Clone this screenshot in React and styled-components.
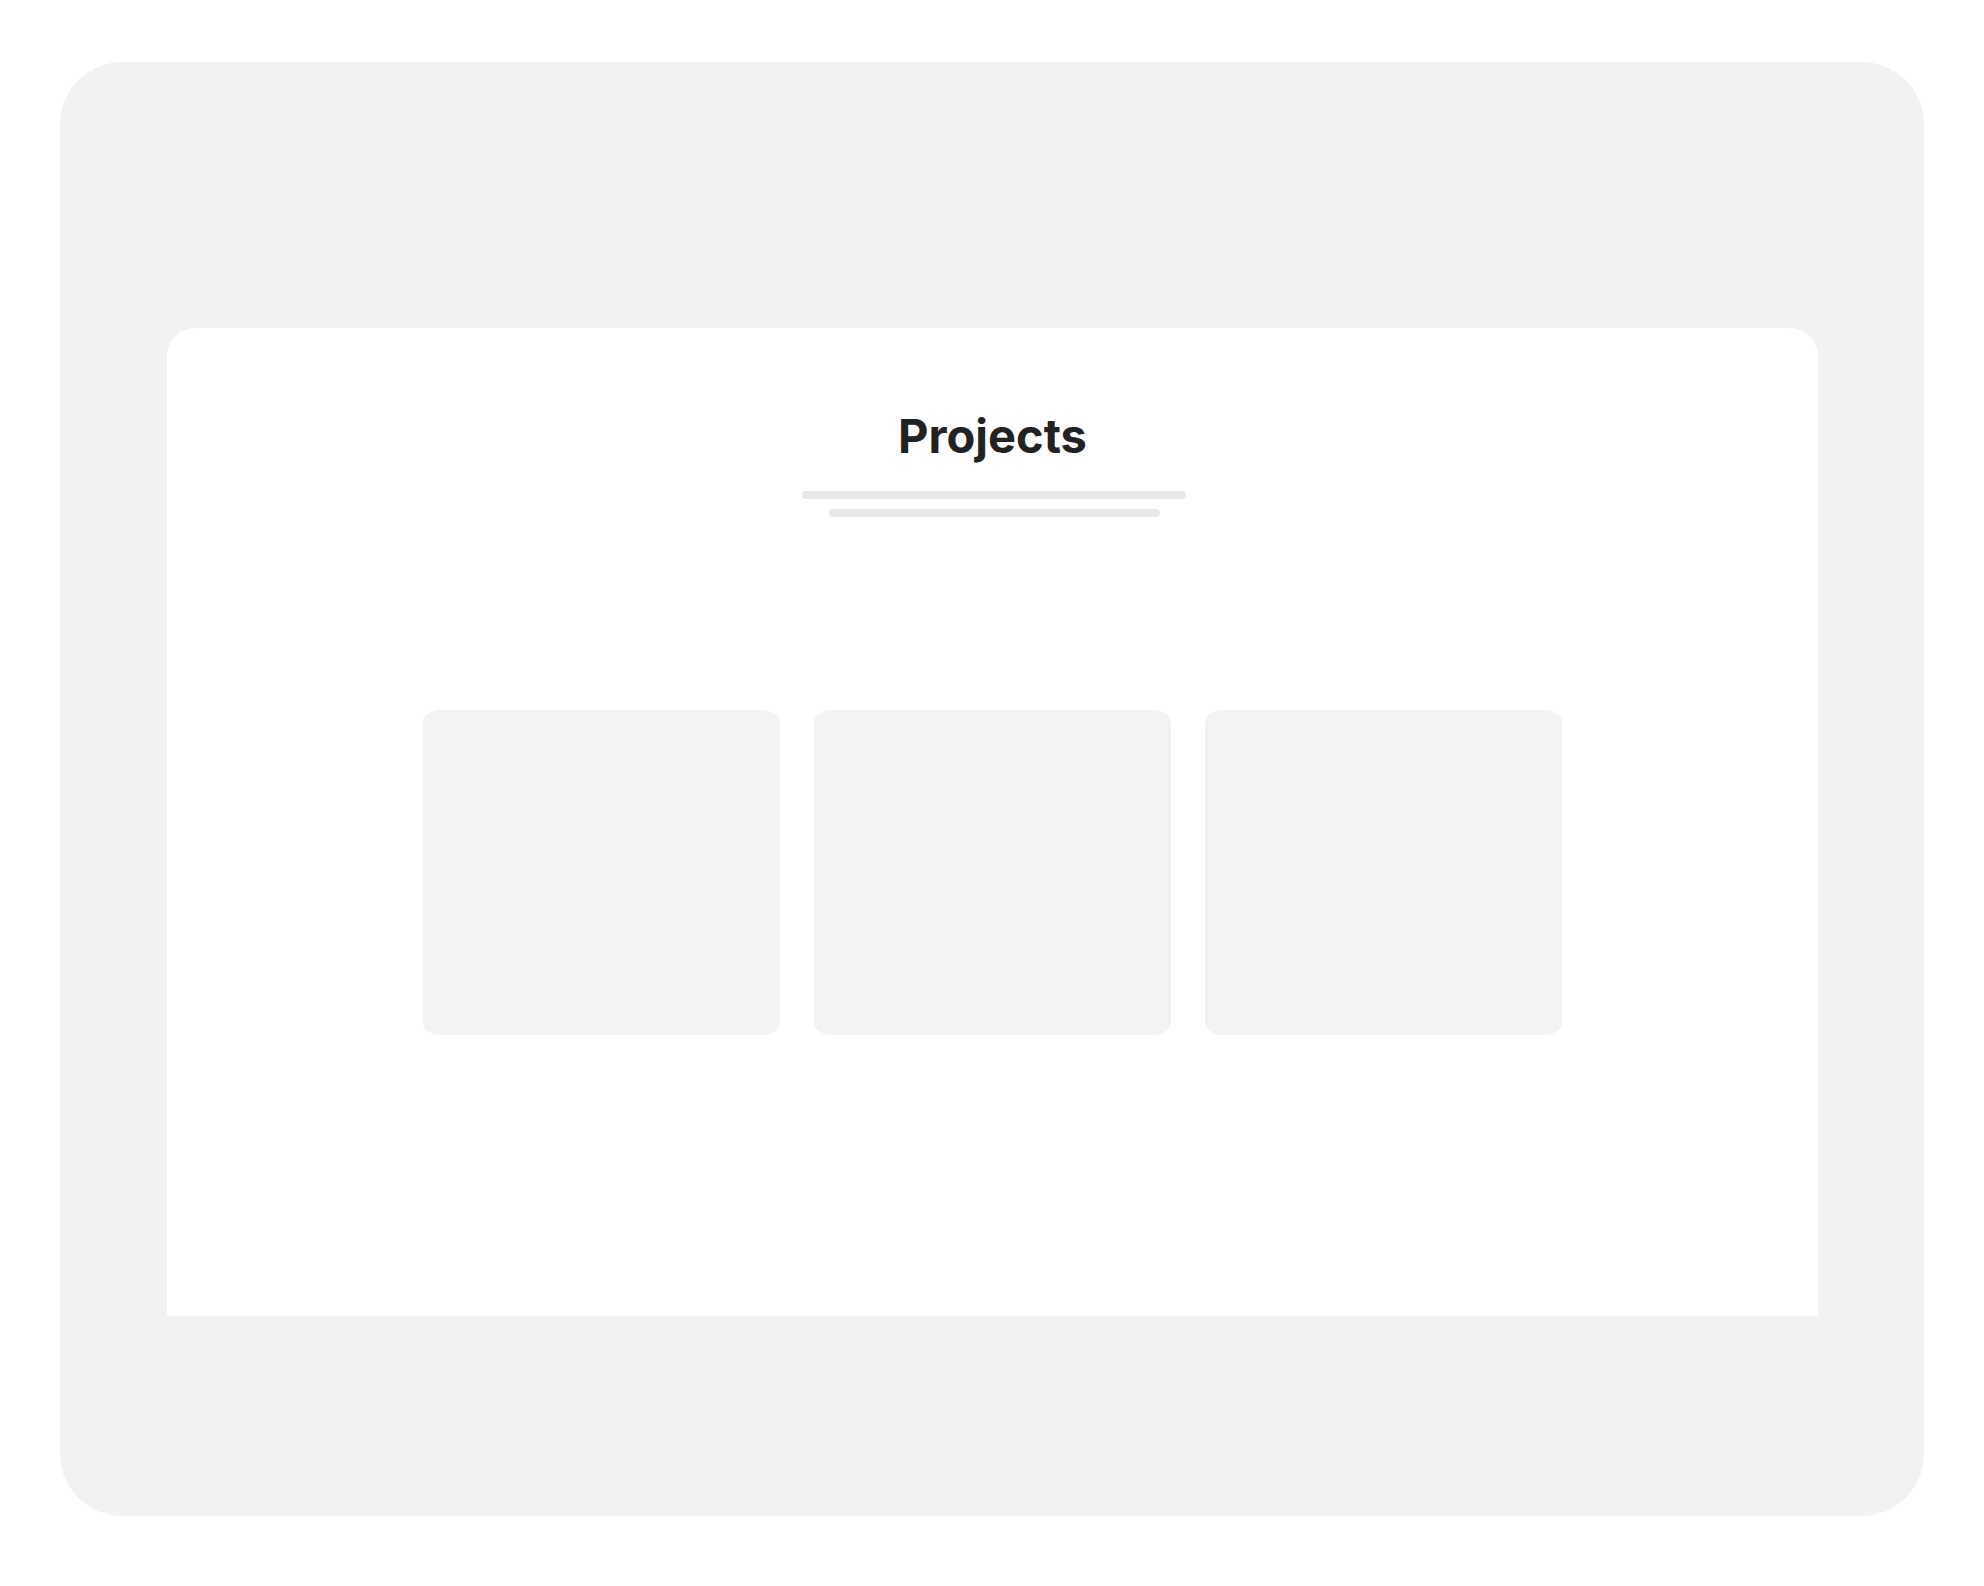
import React from "react";
import styled, { createGlobalStyle } from "styled-components";

const GlobalStyle = createGlobalStyle`
  html, body {
    margin: 0;
    padding: 0;
    background: #ffffff;
  }
  body {
    font-family: Inter, "Noto Sans", "Liberation Sans", sans-serif;
  }
`;

const projects = [1, 2, 3];

export default function App() {
  return (
    <>
      <GlobalStyle />
      <Page>
        <Frame>
          <Screen>
            <Heading>Projects</Heading>
            <Lines>
              <Line width={384} />
              <Line width={331} />
            </Lines>
            <Cards>
              {projects.map((id) => (
                <Card key={id} />
              ))}
            </Cards>
          </Screen>
        </Frame>
      </Page>
    </>
  );
}

const Page = styled.div`
  padding: 62px 0 0 60px;
  width: 1984px;
  height: 1586px;
  box-sizing: border-box;
`;

const Frame = styled.div`
  width: 1864px;
  height: 1454px;
  box-sizing: border-box;
  background: #f2f2f2;
  border-radius: 62px;
  padding: 266px 106px 200px 107px;
  display: flex;
`;

const Screen = styled.div`
  flex: 1;
  background: #ffffff;
  border-radius: 28px 28px 0 0;
  display: flex;
  flex-direction: column;
  align-items: center;
  padding-top: 78px;
`;

const Heading = styled.h1`
  margin: 0;
  font: normal normal 700 47px/60px Inter, "Noto Sans", sans-serif;
  color: #222222;
`;

const Lines = styled.div`
  display: flex;
  flex-direction: column;
  align-items: center;
  gap: 10px;
  margin-top: 25px;
  margin-left: 3px;
`;

const Line = styled.div`
  width: ${(p) => p.width}px;
  height: 8px;
  border-radius: 4px;
  background: #e8e8e8;
`;

const Cards = styled.div`
  display: flex;
  gap: 34px;
  margin-top: 193px;
`;

const Card = styled.div`
  width: 357px;
  height: 325px;
  background: #f3f3f3;
  border-radius: 18px / 12px;
`;
